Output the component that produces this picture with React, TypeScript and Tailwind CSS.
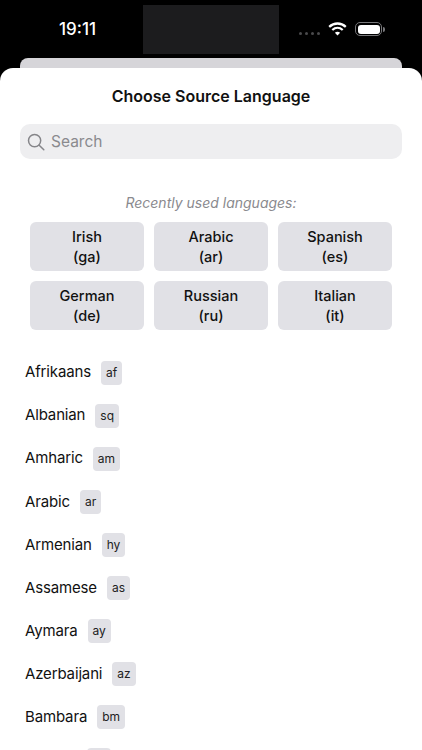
const recent = [
  { name: 'Irish', code: 'ga' },
  { name: 'Arabic', code: 'ar' },
  { name: 'Spanish', code: 'es' },
  { name: 'German', code: 'de' },
  { name: 'Russian', code: 'ru' },
  { name: 'Italian', code: 'it' },
];

const languages = [
  { name: 'Afrikaans', code: 'af' },
  { name: 'Albanian', code: 'sq' },
  { name: 'Amharic', code: 'am' },
  { name: 'Arabic', code: 'ar' },
  { name: 'Armenian', code: 'hy' },
  { name: 'Assamese', code: 'as' },
  { name: 'Aymara', code: 'ay' },
  { name: 'Azerbaijani', code: 'az' },
  { name: 'Bambara', code: 'bm' },
  { name: 'Basque', code: 'eu' },
];

function StatusBar() {
  return (
    <div className="flex h-[58px] shrink-0 items-start bg-black">
      <div className="w-[143px] pt-[18px] pl-[59px] text-[17px] leading-[22px] font-medium text-white">19:11</div>
      <div className="mt-[5px] h-[49px] w-[136px] bg-[#1c1c1e]" />
      <div className="flex flex-1 items-start pt-[20px] pl-[20px]">
        <div className="mt-[12px] flex gap-[3px]">
          <span className="h-[3px] w-[3px] rounded-full bg-[#4a4a4c]" />
          <span className="h-[3px] w-[3px] rounded-full bg-[#4a4a4c]" />
          <span className="h-[3px] w-[3px] rounded-full bg-[#4a4a4c]" />
          <span className="h-[3px] w-[3px] rounded-full bg-[#4a4a4c]" />
        </div>
        <svg className="mt-[2px] ml-[8px]" width="19" height="14" viewBox="0 0 19 14" fill="none" stroke="white" strokeWidth="2.3">
          <path d="M1.2 4.8C6 .4 13 .4 17.8 4.8" />
          <path d="M4.3 8C7.4 5.2 11.6 5.2 14.7 8" />
          <path d="M9.5 13.4 6.9 10.7C8.4 9.5 10.6 9.5 12.1 10.7Z" fill="white" stroke="none" />
        </svg>
        <div className="mt-[2px] ml-[8px] flex items-center">
          <div className="h-[14px] w-[27px] rounded-[5px] border border-[#77777a] p-[1.5px]">
            <div className="h-full w-full rounded-[3px] bg-white" />
          </div>
          <div className="ml-[1px] h-[5px] w-[1.5px] rounded-r-sm bg-[#77777a]" />
        </div>
      </div>
    </div>
  );
}

export default function App() {
  return (
    <div className="flex h-[750px] w-[422px] flex-col overflow-hidden bg-black font-['Inter',sans-serif]">
      <StatusBar />
      <div className="mx-5 h-5 shrink-0 rounded-t-lg bg-[#d6d5d9]" />
      <div className="relative -mt-[10px] flex-1 overflow-hidden rounded-t-[13px] bg-white">
        <h1 className="pt-[17px] text-center text-[16px] leading-[22px] font-semibold text-[#111]">Choose Source Language</h1>

        <div className="mx-5 mt-[17px] flex h-[35px] items-center rounded-[10px] bg-[#eeeef0] pl-[7px]">
          <svg width="18" height="18" viewBox="0 0 18 18" fill="none" stroke="#858589" strokeWidth="1.5" strokeLinecap="round">
            <circle cx="7.6" cy="7.6" r="6.1" />
            <path d="m12.2 12.2 4.6 4.6" />
          </svg>
          <span className="ml-[6px] pt-px text-[15.5px] text-[#8a8a8e]">Search</span>
        </div>

        <p className="mt-[34px] text-center text-[14px] leading-5 text-[#8a8a8e] italic">Recently used languages:</p>

        <div className="mx-[30px] mt-[9px] grid grid-cols-3 gap-x-[10px] gap-y-[10px]">
          {recent.map((lang) => (
            <div key={lang.code} className="flex h-[49px] flex-col items-center justify-center rounded-md bg-[#e1e1e6] text-[14.5px] leading-[20px] font-medium text-[#111]">
              <span>{lang.name}</span>
              <span>({lang.code})</span>
            </div>
          ))}
        </div>

        <div className="mt-[21px] pl-[25px]">
          {languages.map((lang) => (
            <div key={lang.code} className="flex h-[43.1px] items-center">
              <span className="text-[15px] tracking-[-0.15px] text-[#111]">{lang.name}</span>
              <span className="ml-[10px] flex h-6 items-center rounded bg-[#e1e1e6] px-[5px] text-[12px] text-[#222]">{lang.code}</span>
            </div>
          ))}
        </div>
      </div>
    </div>
  );
}
